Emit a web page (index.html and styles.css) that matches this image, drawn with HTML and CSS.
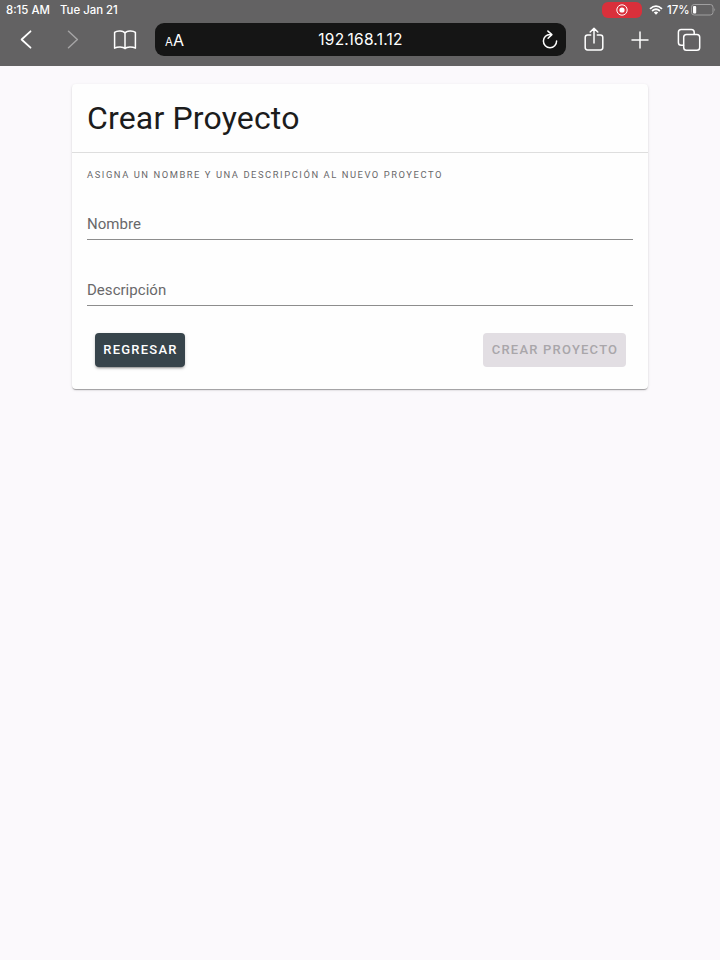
FILE: index.html
```html
<!DOCTYPE html>
<html lang="es">
<head>
<meta charset="utf-8">
<title>Crear Proyecto</title>
<link rel="stylesheet" href="styles.css">
</head>
<body>
<header class="browser">
  <div class="status">
    <span class="time">8:15 AM</span>
    <span class="date">Tue Jan 21</span>
    <span class="recording">
      <svg width="12" height="12" viewBox="0 0 12 12"><circle cx="6" cy="6" r="5.2" fill="none" stroke="#fff"/><circle cx="6" cy="6" r="2.6" fill="#fff"/></svg>
    </span>
    <svg class="wifi" width="14" height="10" viewBox="0 0 14 10" fill="none" stroke="#fff" stroke-width="1.8"><path d="M1 3.8Q7-1.6 13 3.8M3.1 6Q7 2.6 10.9 6"/><path d="M4.8 7.5Q7 5.7 9.2 7.5L7 9.8Z" fill="#fff" stroke="none"/></svg>
    <span class="percent">17%</span>
    <svg class="battery" width="26" height="12" viewBox="0 0 26 12"><rect x=".5" y=".5" width="21.5" height="10.5" rx="2.7" fill="none" stroke="#a09fa0"/><rect x="2" y="2" width="3.2" height="7.5" rx="1" fill="#fff"/><path d="M23.4 4Q25 5.7 23.4 7.5Z" fill="#a09fa0"/></svg>
  </div>
  <nav class="toolbar">
    <svg class="back" width="12" height="19" viewBox="0 0 12 19"><path d="M10.5 1.3 1.6 9.5l8.9 8.2"/></svg>
    <svg class="forward" width="12" height="19" viewBox="0 0 12 19"><path d="m1.5 1.3 8.9 8.2-8.9 8.2"/></svg>
    <svg class="book" width="24" height="20" viewBox="0 0 24 20"><path d="M12 3.2C10.5.5 4.2.3 1.6 2.4v15.8c2.9-1.8 8.7-1.7 10.4.4 1.7-2.1 7.5-2.2 10.4-.4V2.4C19.8.3 13.5.5 12 3.2Zm0 0v15.4"/></svg>
    <div class="address">
      <span class="text-size"><span class="small-a">A</span>A</span>
      <span class="url">192.168.1.12</span>
      <svg class="reload" width="16" height="19" viewBox="0 0 16 19"><path d="M8.2 4.5A6.6 6.6 0 1 0 14.6 11M5.9 1.1l4 3.5-3.8 3.7"/></svg>
    </div>
    <svg class="share" width="20" height="25" viewBox="0 0 20 25"><path d="M6.7 8H3.6Q1.2 8 1.2 10.4v10.2Q1.2 23 3.6 23h12.8q2.4 0 2.4-2.4V10.4Q18.8 8 16.4 8h-3.1M10 16V1.5M6.2 5 10 1.4 13.8 5"/></svg>
    <svg class="plus" width="18" height="18" viewBox="0 0 18 18"><path d="M9 1v16M1 9h16"/></svg>
    <svg class="tabs" width="24" height="24" viewBox="0 0 24 24"><rect x="6.7" y="6.5" width="16" height="15.8" rx="2.8"/><path d="M6.5 17.3H4.2q-2.8 0-2.8-2.8V4.2q0-2.8 2.8-2.8h10.2q2.8 0 2.8 2.8v2"/></svg>
  </nav>
</header>
<main class="card">
  <h1 class="title">Crear Proyecto</h1>
  <form class="form">
    <p class="hint">ASIGNA UN NOMBRE Y UNA DESCRIPCIÓN AL NUEVO PROYECTO</p>
    <div class="field">Nombre</div>
    <div class="field second">Descripción</div>
    <div class="actions">
      <button class="button primary" type="button">REGRESAR</button>
      <button class="button" type="button" disabled>CREAR PROYECTO</button>
    </div>
  </form>
</main>
</body>
</html>
```
FILE: styles.css
```css
* { box-sizing: border-box; }
body {
  margin: 0;
  min-height: 960px;
  background: #fbf9fc;
  font-family: Roboto, sans-serif;
}
svg { display: block; flex: none; }
.browser {
  height: 66px;
  background: #636263;
  color: #fff;
  font-family: Inter, sans-serif;
}
.status {
  height: 19px;
  display: flex;
  align-items: center;
  padding: 1px 3px 0 6px;
  font-size: 11.4px;
  font-weight: 500;
  white-space: nowrap;
}
.time { width: 54px; }
.date { width: 542px; }
.recording {
  width: 40px;
  height: 16px;
  flex: none;
  display: flex;
  align-items: center;
  justify-content: center;
  border-radius: 6px;
  background: #d9303b;
}
.wifi { margin-left: 7px; }
.percent { width: 24px; margin-left: 4px; }
.toolbar {
  height: 41px;
  display: flex;
  align-items: center;
  padding-left: 20px;
}
.toolbar svg {
  fill: none;
  stroke: #fff;
  stroke-width: 1.5;
  stroke-linecap: round;
  stroke-linejoin: round;
}
.toolbar .back { stroke-width: 1.8; }
.toolbar .forward { margin-left: 35px; stroke: #a5a4a5; }
.book { margin-left: 34px; }
.address {
  width: 411px;
  height: 33px;
  margin: 0 18px;
  padding: 0 8px 0 10px;
  display: grid;
  grid-template-columns: 38px 1fr 40px;
  align-items: center;
  border-radius: 9px;
  background: #151515;
}
.text-size { font-size: 16px; }
.small-a { font-size: 11.5px; }
.url { text-align: center; font-size: 15.5px; letter-spacing: .2px; }
.reload { justify-self: end; }
.plus { margin-left: 27px; }
.tabs { margin-left: 28px; }
.card {
  width: 576px;
  height: 305px;
  margin: 18px auto 0;
  border-radius: 4px;
  background: #fefefe;
  box-shadow: 0 2px 1px -1px rgba(0,0,0,.2), 0 1px 1px rgba(0,0,0,.14), 0 1px 3px rgba(0,0,0,.12);
}
.title {
  height: 69px;
  margin: 0;
  padding: 0 15px;
  border-bottom: 1px solid #dedede;
  color: #1c1c1c;
  font-size: 32px;
  font-weight: 400;
  line-height: 68px;
  letter-spacing: .16px;
}
.form { padding: 0 15px; }
.hint {
  margin: 0;
  padding-top: 14px;
  color: #69686a;
  font-size: 9.4px;
  line-height: 15px;
  letter-spacing: 1.55px;
  white-space: nowrap;
}
.field {
  height: 32px;
  margin-top: 26px;
  border-bottom: 1px solid #8d8d8d;
  color: #69686a;
  font-size: 15px;
  line-height: 32px;
  letter-spacing: .03px;
}
.second { margin-top: 34px; }
.actions {
  display: flex;
  justify-content: space-between;
  padding: 27px 7px 0 8px;
}
.button {
  width: 143px;
  height: 34px;
  padding: 0 0 0 1px;
  border: 0;
  border-radius: 4px;
  background: #e2dee3;
  color: #a9a6aa;
  font: 500 13px/34px Roboto, sans-serif;
  letter-spacing: 1.22px;
  white-space: nowrap;
}
.primary {
  width: 90px;
  background: #37444b;
  color: #fff;
  box-shadow: 0 3px 1px -2px rgba(0,0,0,.2), 0 2px 2px rgba(0,0,0,.14), 0 1px 4px rgba(0,0,0,.12);
}
```
